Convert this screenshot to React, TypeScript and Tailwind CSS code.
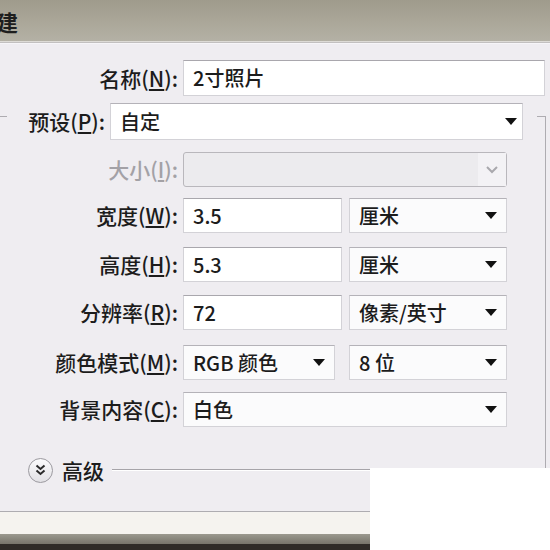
import React from "react";

const font = "font-['Noto_Sans_CJK_SC','Liberation_Sans',sans-serif]";

function Label({ text, keyChar, width, disabled }: { text: string; keyChar: string; width: string; disabled?: boolean }) {
  return (
    <div className={`${width} shrink-0 text-right pr-[5px] text-[21px] font-medium ${disabled ? "text-[#a3a1a6]" : "text-[#1c1c1c]"}`}>
      {text}(<span className="underline underline-offset-2">{keyChar}</span>):
    </div>
  );
}

function Arrow() {
  return <span className="w-0 h-0 border-l-[6px] border-r-[6px] border-t-[7px] border-l-transparent border-r-transparent border-t-[#111]" />;
}

function Select({ value, width, arrowPad = "pr-[9px]", bg = "bg-[#fbfbfc]" }: { value: string; width: string; arrowPad?: string; bg?: string }) {
  return (
    <div className={`${width} h-full flex items-center justify-between pl-[9px] ${arrowPad} ${bg} border border-[#d3d2d7] border-t-[#b4b2b8]`}>
      <span>{value}</span>
      <Arrow />
    </div>
  );
}

function Input({ value, width }: { value: string; width: string }) {
  return (
    <div className={`${width} h-full flex items-center pl-[9px] bg-white border border-[#d3d2d7] border-t-[#a9a7ad]`}>
      {value}
    </div>
  );
}

export default function App() {
  return (
    <div className={`relative w-[550px] h-[550px] overflow-hidden bg-[#efedf1] text-[20px] leading-none font-medium text-[#1c1c1c] ${font}`}>
      {/* title bar */}
      <div className="h-[41px] bg-gradient-to-b from-[#9f9b8c] via-[#aaa698] to-[#b4b1a5] flex items-center">
        <span className="-ml-[26px] text-[22px] text-[#1e1e1e] font-bold">新建</span>
      </div>
      <div className="h-px bg-[#dddbd6]" />
      <div className="h-px bg-[#c2c0c0]" />
      <div className="h-px bg-[#f6f5f8]" />

      {/* name */}
      <div className="mt-[16px] h-[36px] flex items-center">
        <Label text="名称" keyChar="N" width="w-[183px]" />
        <Input value="2寸照片" width="w-[362px]" />
      </div>

      {/* group box with preset as header */}
      <div className="mt-[20px] -ml-[10px] w-[556px] h-[396px] border border-[#aeacb1] pl-[9px]">
        <div className="-mt-[14px] ml-[7px] w-[530px] h-[37px] flex items-center bg-[#efedf1] pr-[14px]">
          <Label text="预设" keyChar="P" width="w-[103px]" />
          <Select value="自定" width="w-[413px]" arrowPad="pr-[5px]" bg="bg-white" />
        </div>

        <div className="mt-[12px] h-[35px] flex items-center">
          <Label text="大小" keyChar="I" width="w-[183px]" disabled />
          <div className="w-[324px] h-full flex items-center justify-end rounded-[3px] border border-[#b9b7bc] bg-[#ecebee]">
            <div className="w-[28px] h-full flex items-center justify-center bg-[#f3f2f5]">
              <svg width="12" height="8" viewBox="0 0 12 8">
                <polyline points="1,1 6,6 11,1" fill="none" stroke="#a9a8ad" strokeWidth="2" />
              </svg>
            </div>
          </div>
        </div>

        <div className="mt-[11px] h-[35px] flex items-center">
          <Label text="宽度" keyChar="W" width="w-[183px]" />
          <Input value="3.5" width="w-[159px]" />
          <div className="ml-[7px] h-full flex">
            <Select value="厘米" width="w-[158px]" />
          </div>
        </div>

        <div className="mt-[14px] h-[35px] flex items-center">
          <Label text="高度" keyChar="H" width="w-[183px]" />
          <Input value="5.3" width="w-[159px]" />
          <div className="ml-[7px] h-full flex">
            <Select value="厘米" width="w-[158px]" />
          </div>
        </div>

        <div className="mt-[13px] h-[35px] flex items-center">
          <Label text="分辨率" keyChar="R" width="w-[183px]" />
          <Input value="72" width="w-[159px]" />
          <div className="ml-[7px] h-full flex">
            <Select value="像素/英寸" width="w-[158px]" />
          </div>
        </div>

        <div className="mt-[15px] h-[35px] flex items-center">
          <Label text="颜色模式" keyChar="M" width="w-[183px]" />
          <Select value="RGB 颜色" width="w-[152px]" />
          <div className="ml-[14px] h-full flex">
            <Select value="8 位" width="w-[158px]" />
          </div>
        </div>

        <div className="mt-[12px] h-[35px] flex items-center">
          <Label text="背景内容" keyChar="C" width="w-[183px]" />
          <Select value="白色" width="w-[324px]" />
        </div>

        {/* advanced */}
        <div className="mt-[30px] h-[26px] flex items-center">
          <div className="ml-[28px] w-[25px] h-[25px] rounded-full border border-[#9c9aa0] bg-gradient-to-b from-[#fbfbfc] to-[#e2e1e5] flex items-center justify-center">
            <svg width="11" height="12" viewBox="0 0 11 12">
              <polyline points="1.5,1.5 5.5,5 9.5,1.5" fill="none" stroke="#2a2a2a" strokeWidth="2" />
              <polyline points="1.5,6.5 5.5,10 9.5,6.5" fill="none" stroke="#2a2a2a" strokeWidth="2" />
            </svg>
          </div>
          <span className="ml-[9px] text-[21px]">高级</span>
          <div className="ml-[8px] w-[380px] flex flex-col">
            <div className="h-px bg-[#a6a4a9]" />
            <div className="h-px bg-white" />
          </div>
        </div>
      </div>

      {/* window bottom edge */}
      <div className="h-[22px] bg-[#f5f3ef]" />
      <div className="h-[10px] bg-gradient-to-b from-[#9b998f] to-[#77746a]" />
      <div className="h-[10px] bg-[#2f2b27]" />

      {/* cover */}
      <div className="absolute left-[370px] top-[468px] right-0 bottom-0 bg-white" />
    </div>
  );
}
